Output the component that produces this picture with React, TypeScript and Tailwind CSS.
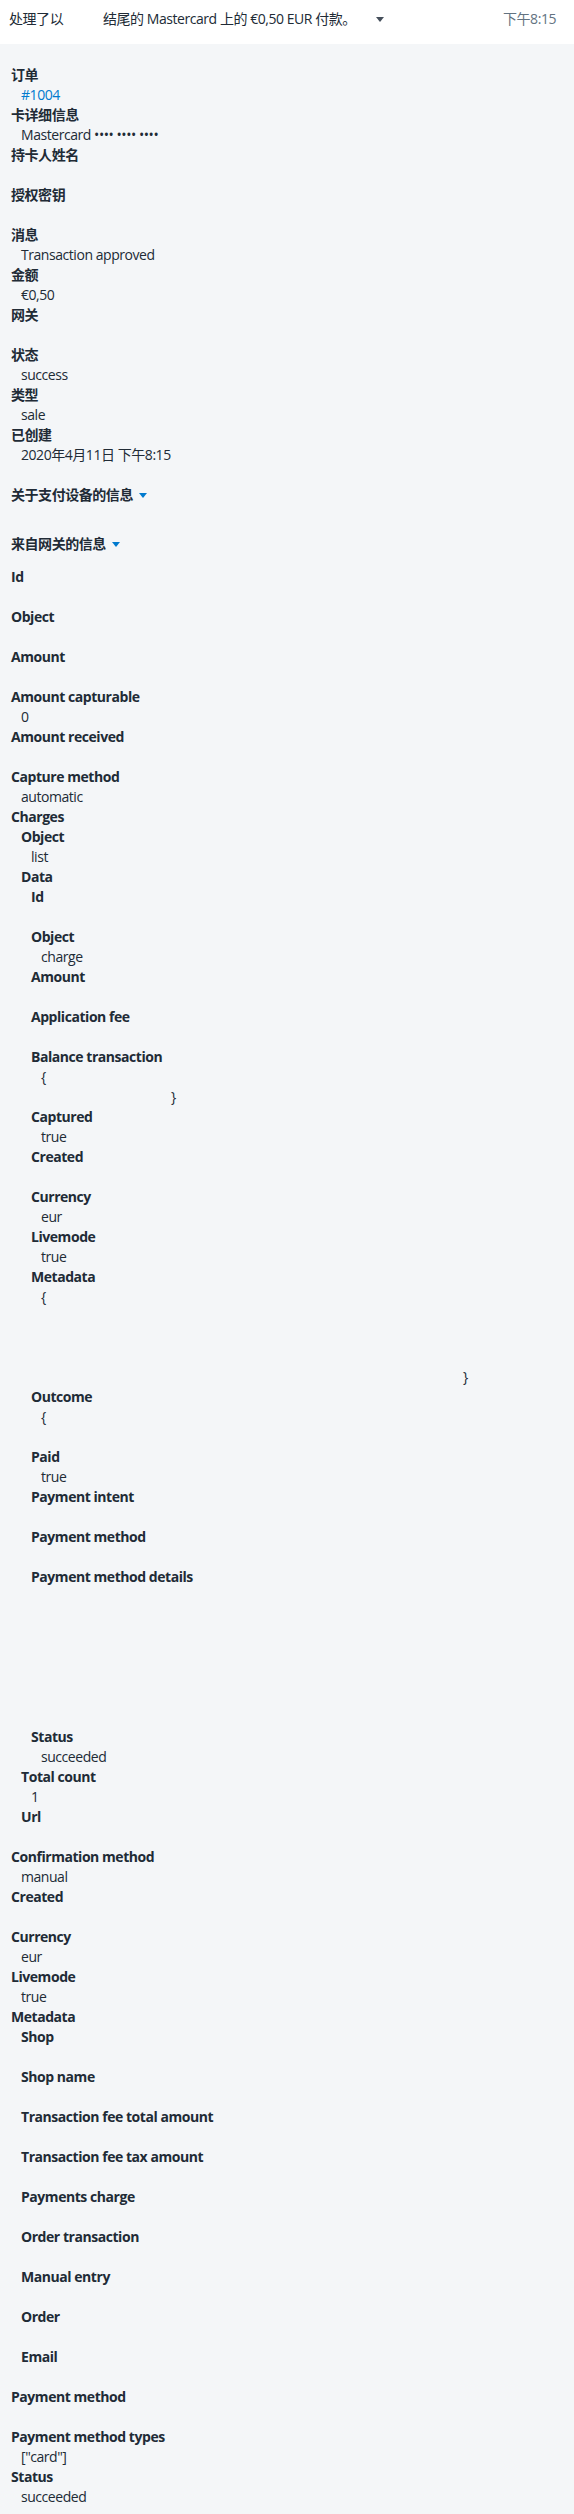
import React from "react";

type Line = { text: string; cls?: string };
type Field = {
  label: string;
  value?: string;
  valueCls?: string;
  lines?: Line[];
  children?: Field[];
};

const blank = (n: number): Line[] => Array.from({ length: n }, () => ({ text: "" }));

const orderInfo: Field[] = [
  { label: "订单", value: "#1004", valueCls: "text-[#007ace]" },
  { label: "卡详细信息", value: "Mastercard •••• •••• ••••" },
  { label: "持卡人姓名" },
  { label: "授权密钥" },
  { label: "消息", value: "Transaction approved" },
  { label: "金额", value: "€0,50" },
  { label: "网关" },
  { label: "状态", value: "success" },
  { label: "类型", value: "sale" },
  { label: "已创建", value: "2020年4月11日 下午8:15" },
];

const gatewayInfo: Field[] = [
  { label: "Id" },
  { label: "Object" },
  { label: "Amount" },
  { label: "Amount capturable", value: "0" },
  { label: "Amount received" },
  { label: "Capture method", value: "automatic" },
  {
    label: "Charges",
    children: [
      { label: "Object", value: "list" },
      {
        label: "Data",
        children: [
          { label: "Id" },
          { label: "Object", value: "charge" },
          { label: "Amount" },
          { label: "Application fee" },
          {
            label: "Balance transaction",
            lines: [{ text: "{" }, { text: "}", cls: "pl-[140px]" }],
          },
          { label: "Captured", value: "true" },
          { label: "Created" },
          { label: "Currency", value: "eur" },
          { label: "Livemode", value: "true" },
          {
            label: "Metadata",
            lines: [{ text: "{" }, ...blank(3), { text: "}", cls: "pl-[432px]" }],
          },
          { label: "Outcome", lines: [{ text: "{" }, ...blank(1)] },
          { label: "Paid", value: "true" },
          { label: "Payment intent" },
          { label: "Payment method" },
          { label: "Payment method details", lines: blank(7) },
          { label: "Status", value: "succeeded" },
        ],
      },
      { label: "Total count", value: "1" },
      { label: "Url" },
    ],
  },
  { label: "Confirmation method", value: "manual" },
  { label: "Created" },
  { label: "Currency", value: "eur" },
  { label: "Livemode", value: "true" },
  {
    label: "Metadata",
    children: [
      { label: "Shop" },
      { label: "Shop name" },
      { label: "Transaction fee total amount" },
      { label: "Transaction fee tax amount" },
      { label: "Payments charge" },
      { label: "Order transaction" },
      { label: "Manual entry" },
      { label: "Order" },
      { label: "Email" },
    ],
  },
  { label: "Payment method" },
  { label: "Payment method types", value: '["card"]' },
  { label: "Status", value: "succeeded" },
];

const Caret = ({ className }: { className: string }) => (
  <svg className={className} width="8" height="5" viewBox="0 0 8 5">
    <path d="M0 0h8L4 5z" fill="currentColor" />
  </svg>
);

const FieldRow = ({ field }: { field: Field }) => {
  const lines: Line[] = field.lines ?? [{ text: field.value ?? "", cls: field.valueCls }];
  return (
    <div>
      <div className="font-bold h-5">{field.label}</div>
      {field.children ? (
        <div className="pl-[10px]">
          {field.children.map((c, i) => (
            <FieldRow key={i} field={c} />
          ))}
        </div>
      ) : (
        lines.map((l, i) => (
          <div key={i} className={`h-5 pl-[10px] whitespace-pre ${l.cls ?? ""}`}>
            <span>{l.text || "\u00a0"}</span>
          </div>
        ))
      )}
    </div>
  );
};

export default function App() {
  return (
    <div
      className="min-h-screen bg-[#f4f6f8] text-[14px] leading-5 tracking-[-0.45px] text-[#212b36]"
      style={{ fontFamily: "'Open Sans', 'Noto Sans CJK SC', sans-serif" }}
    >
      {/* Top bar */}
      <div className="flex h-[44px] items-start bg-white pl-[9px] pr-[18px] pt-[9px]">
        <span className="w-[94px]">处理了以</span>
        <span>结尾的 Mastercard 上的 €0,50 EUR 付款。</span>
        <Caret className="ml-[20px] mt-[8px] text-[#454f5b]" />
        <span className="ml-auto text-[#637381]">下午8:15</span>
      </div>

      <div className="pl-[11px] pt-[21px] pb-[7px]">
        {orderInfo.map((f, i) => (
          <FieldRow key={i} field={f} />
        ))}

        <div className="mt-5 flex h-5 items-center font-bold">
          关于支付设备的信息
          <Caret className="ml-[6px] text-[#007ace]" />
        </div>

        <div className="mt-[29px] flex h-5 items-center font-bold">
          来自网关的信息
          <Caret className="ml-[6px] text-[#007ace]" />
        </div>

        <div className="mt-[13px]">
          {gatewayInfo.map((f, i) => (
            <FieldRow key={i} field={f} />
          ))}
        </div>
      </div>
    </div>
  );
}
